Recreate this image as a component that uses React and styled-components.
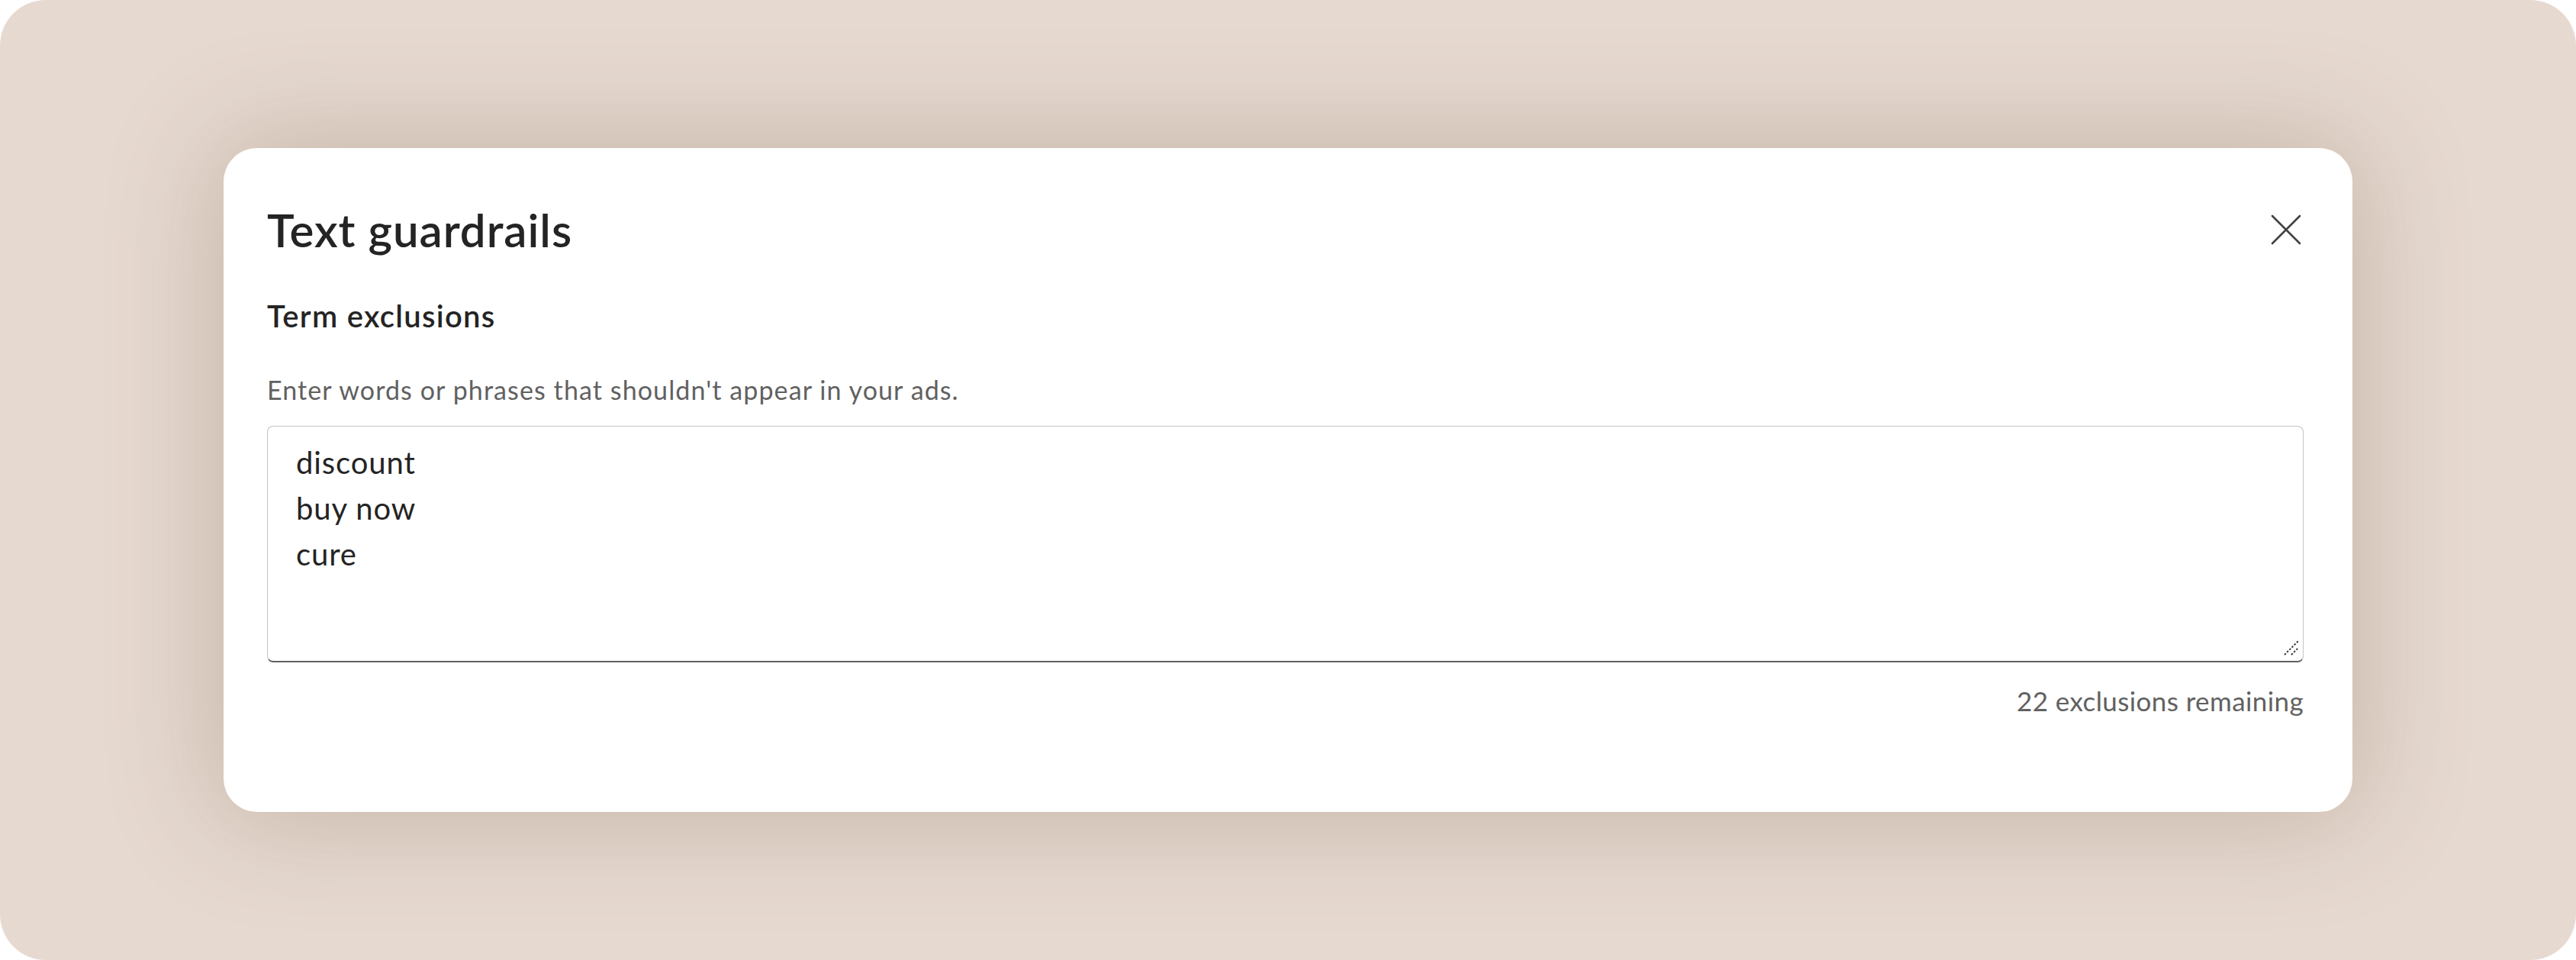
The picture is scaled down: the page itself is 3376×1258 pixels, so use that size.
import { useState } from 'react';
import styled, { createGlobalStyle } from 'styled-components';

const color = {
  page: '#ffffff',
  backdrop: '#e6d9d0',
  white: '#ffffff',
  text: '#242424',
  textSoft: '#616161',
  icon: '#424242',
  border: '#c4c4c4',
  borderStrong: '#616161',
};

const GlobalStyle = createGlobalStyle`
  html, body {
    margin: 0;
    padding: 0;
    background: ${color.page};
  }
  body {
    font-family: Lato, "Noto Sans", "Open Sans", sans-serif;
    color: ${color.text};
  }
`;

export default function App() {
  const [terms, setTerms] = useState('discount\nbuy now\ncure');
  const maxTerms = 25;
  const used = terms.split('\n').filter((t) => t.trim() !== '').length;

  return (
    <>
      <GlobalStyle />
      <Style.Backdrop>
        <Style.Dialog role="dialog" aria-labelledby="guardrails-title">
          <Style.Header>
            <Style.Title id="guardrails-title">Text guardrails</Style.Title>
            <Style.CloseButton aria-label="Close">
              <svg width="40" height="40" viewBox="0 0 40 40" fill="none">
                <path d="M2 2 L38 38 M38 2 L2 38" stroke={color.icon} strokeWidth="2.6" strokeLinecap="round" />
              </svg>
            </Style.CloseButton>
          </Style.Header>
          <Style.SectionTitle>Term exclusions</Style.SectionTitle>
          <Style.Hint>Enter words or phrases that shouldn't appear in your ads.</Style.Hint>
          <Style.Field>
            <Style.TextArea value={terms} onChange={(e) => setTerms(e.target.value)} spellCheck={false} />
            {/* resize grip */}
            <Style.Grip width="22" height="22" viewBox="0 0 22 22" fill="none">
              <path d="M2 20 L20 2 M11 20 L20 11" stroke="#3a3a3a" strokeWidth="2" strokeDasharray="2.5 2" />
            </Style.Grip>
          </Style.Field>
          <Style.Counter>{maxTerms - used} exclusions remaining</Style.Counter>
        </Style.Dialog>
      </Style.Backdrop>
    </>
  );
}

const Style = {
  Backdrop: styled.div`
    display: flex;
    justify-content: center;
    align-items: center;

    width: 3376px;
    height: 1258px;
    border-radius: 60px;
    overflow: hidden;

    background-color: ${color.backdrop};
  `,
  Dialog: styled.section`
    display: flex;
    flex-direction: column;
    box-sizing: border-box;

    width: 2790px;
    padding: 71px 64px 126px 57px;

    border-radius: 44px;
    background-color: ${color.white};
    box-shadow: 0 0 140px 10px rgba(120, 88, 70, 0.28);
  `,
  Header: styled.div`
    display: flex;
    justify-content: space-between;
    align-items: center;
  `,
  Title: styled.h2`
    margin: 0;
    font-size: 60px;
    line-height: 72px;
    font-weight: 600;
    letter-spacing: 1px;
    color: ${color.text};
  `,
  CloseButton: styled.button`
    display: flex;
    justify-content: center;
    align-items: center;

    width: 46px;
    height: 46px;
    padding: 0;

    border: none;
    background: transparent;
    cursor: pointer;
  `,
  SectionTitle: styled.h3`
    margin: 54px 0 0;
    font-size: 40px;
    line-height: 46px;
    font-weight: 600;
    letter-spacing: 1.3px;
    color: ${color.text};
  `,
  Hint: styled.p`
    margin: 55px 0 0;
    font-size: 34px;
    line-height: 38px;
    font-weight: 400;
    letter-spacing: 1.1px;
    color: ${color.textSoft};
  `,
  Field: styled.div`
    position: relative;
    margin-top: 28px;
  `,
  TextArea: styled.textarea`
    display: block;
    box-sizing: border-box;

    width: 100%;
    height: 310px;
    padding: 17px 37px;

    font-family: Lato, "Noto Sans", sans-serif;
    font-size: 40px;
    line-height: 60px;
    letter-spacing: 0.9px;
    color: ${color.text};

    border: 1px solid ${color.border};
    border-bottom: 2px solid ${color.borderStrong};
    border-radius: 8px;
    outline: none;
    resize: none;
  `,
  Grip: styled.svg`
    position: absolute;
    right: 5px;
    bottom: 8px;
    pointer-events: none;
  `,
  Counter: styled.p`
    margin: 30px 0 0;
    text-align: right;
    font-size: 35px;
    line-height: 40px;
    letter-spacing: 0.4px;
    color: ${color.textSoft};
  `,
};
